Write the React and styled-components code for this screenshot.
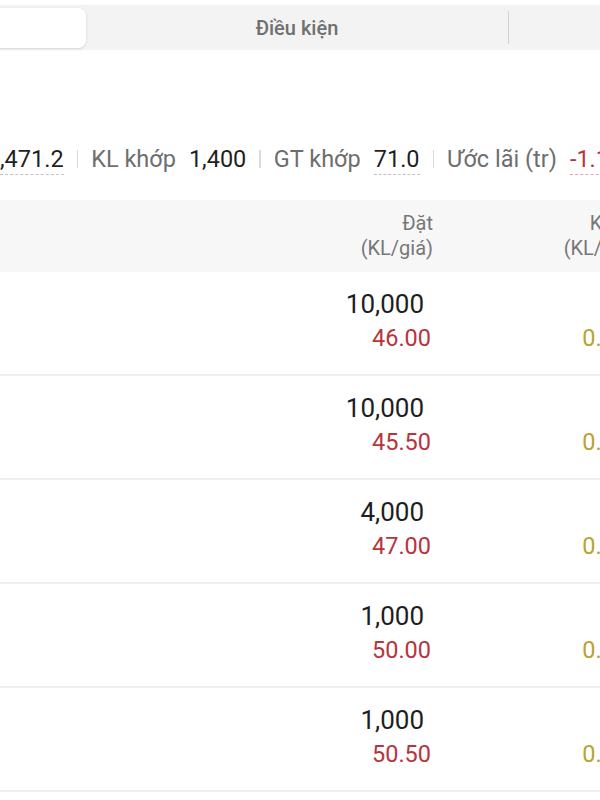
import React from 'react';
import styled, { createGlobalStyle } from 'styled-components';

const Global = createGlobalStyle`
  html, body { margin: 0; padding: 0; background: #fff; }
  body {
    font-family: Roboto, "Noto Sans", "Liberation Sans", sans-serif;
    overflow: hidden;
  }
`;

const Page = styled.div`
  width: 600px;
  height: 800px;
  overflow: hidden;
  background: #fff;
  padding-top: 5px;
  box-sizing: border-box;
`;

const TabBar = styled.div`
  display: flex;
  align-items: center;
  height: 45px;
  width: 1300px;
  margin-left: -336px;
  background: #f3f3f3;
`;

const Tab = styled.div`
  flex: 0 0 422px;
  height: 40px;
  display: flex;
  align-items: center;
  justify-content: center;
  font-size: 20px;
  font-weight: 500;
  color: #707070;
  border-radius: 8px;
  background: ${(p) => (p.$active ? '#fff' : 'transparent')};
  box-shadow: ${(p) => (p.$active ? '0 1px 3px rgba(0,0,0,0.12)' : 'none')};
`;

const TabSep = styled.div`
  flex: 0 0 1px;
  height: 33px;
  background: #d2d2d2;
`;

const StatsRow = styled.div`
  display: flex;
  align-items: center;
  gap: 13px;
  margin-top: 92px;
  height: 34px;
  width: max-content;
  white-space: nowrap;
  font-size: 23.5px;
`;

const StatItem = styled.div`
  display: flex;
  flex-shrink: 0;
  align-items: center;
  gap: 13px;
`;

const StatLabel = styled.span`
  color: #6e6e6e;
`;

const StatValue = styled.span`
  flex-shrink: 0;
  color: ${(p) => (p.$neg ? '#b8343c' : '#1f1f1f')};
  line-height: 30px;
  border-bottom: ${(p) => (p.$dashed ? `1.5px dashed ${p.$neg ? '#e0a8ac' : '#c4c4c4'}` : '1.5px solid transparent')};
`;

const StatSep = styled.div`
  flex: 0 0 1.5px;
  height: 18px;
  background: #dcdcdc;
`;

const Table = styled.div`
  margin-top: 24px;
  width: 660px;
`;

const HeadRow = styled.div`
  display: grid;
  grid-template-columns: 228px 205px 203px;
  height: 72px;
  box-sizing: border-box;
  padding-top: 11px;
  background: #f7f7f7;
`;

const HeadCell = styled.div`
  text-align: right;
  font-size: 20px;
  line-height: 25px;
  color: #777;
`;

const Row = styled.div`
  display: grid;
  grid-template-columns: 228px 205px 203px;
  height: 104px;
  box-sizing: border-box;
  padding-top: 17px;
  border-bottom: 2px solid #eeeeee;
`;

const Cell = styled.div`
  display: flex;
  flex-direction: column;
  align-items: flex-end;
  padding-right: ${(p) => p.$pad || 0}px;
`;

const Qty = styled.div`
  font-size: 26px;
  line-height: 30px;
  min-height: 30px;
  color: #1e1e1e;
  padding-right: 9px;
`;

const Price = styled.div`
  margin-top: 4px;
  font-size: 23.5px;
  line-height: 30px;
  color: ${(p) => p.$color};
  padding-right: 2px;
`;

const rows = [
  { qty: '10,000', price: '46.00' },
  { qty: '10,000', price: '45.50' },
  { qty: '4,000', price: '47.00' },
  { qty: '1,000', price: '50.00' },
  { qty: '1,000', price: '50.50' },
];

export default function App() {
  return (
    <Page>
      <Global />
      <TabBar>
        <Tab $active>Thường</Tab>
        <Tab>Điều kiện</Tab>
        <TabSep />
        <Tab>Lịch sử</Tab>
      </TabBar>

      <StatsRow>
        <StatValue $dashed>,471.2</StatValue>
        <StatSep />
        <StatItem>
          <StatLabel>KL khớp</StatLabel>
          <StatValue>1,400</StatValue>
        </StatItem>
        <StatSep />
        <StatItem>
          <StatLabel>GT khớp</StatLabel>
          <StatValue $dashed>71.0</StatValue>
        </StatItem>
        <StatSep />
        <StatItem>
          <StatLabel>Ước lãi (tr)</StatLabel>
          <StatValue $dashed $neg>-1.1</StatValue>
        </StatItem>
      </StatsRow>

      <Table>
        <HeadRow>
          <div />
          <HeadCell>Đặt<br />(KL/giá)</HeadCell>
          <HeadCell>Khớp<br />(KL/giá)</HeadCell>
        </HeadRow>
        {rows.map((r, i) => (
          <Row key={i}>
            <div />
            <Cell>
              <Qty>{r.qty}</Qty>
              <Price $color="#b8343c">{r.price}</Price>
            </Cell>
            <Cell $pad={6}>
              <Qty />
              <Price $color="#b9a232">0.00</Price>
            </Cell>
          </Row>
        ))}
      </Table>
    </Page>
  );
}
